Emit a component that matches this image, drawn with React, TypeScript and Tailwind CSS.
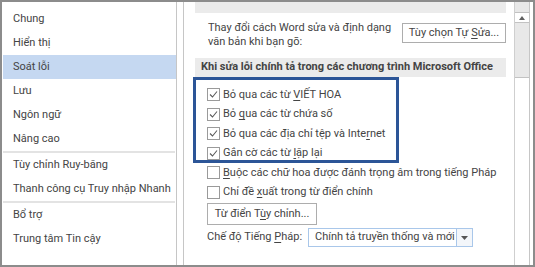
import type { ReactNode } from "react";

const font = { fontFamily: 'Roboto, "Noto Sans", sans-serif' };

function U({ children }: { children: ReactNode }) {
  return <span className="underline underline-offset-2 decoration-[1px]">{children}</span>;
}

type NavItem = { label: string; active?: boolean } | "sep";

const nav: NavItem[] = [
  { label: "Chung" },
  { label: "Hiển thị" },
  { label: "Soát lỗi", active: true },
  { label: "Lưu" },
  { label: "Ngôn ngữ" },
  { label: "Nâng cao" },
  "sep",
  { label: "Tùy chỉnh Ruy-băng" },
  { label: "Thanh công cụ Truy nhập Nhanh" },
  "sep",
  { label: "Bổ trợ" },
  { label: "Trung tâm Tin cậy" },
];

const options: { checked: boolean; label: ReactNode }[] = [
  { checked: true, label: <>Bỏ qua các từ <U>V</U>IẾT HOA</> },
  { checked: true, label: <>Bỏ <U>q</U>ua các từ chứa số</> },
  { checked: true, label: <>Bỏ qua các địa chỉ tệp và Inte<U>r</U>net</> },
  { checked: true, label: <>Gắn cờ các từ <U>l</U>ặp lại</> },
  { checked: false, label: <><U>B</U>uộc các chữ hoa được đánh trọng âm trong tiếng Pháp</> },
  { checked: false, label: <>Chỉ đề <U>x</U>uất trong từ điển chính</> },
];

function Checkbox({ checked }: { checked: boolean }) {
  return (
    <span className="flex h-[13px] w-[13px] shrink-0 items-center justify-center border border-[#9a9a9a] bg-white">
      {checked && (
        <svg width="11" height="11" viewBox="0 0 11 11">
          <path d="M2 5.5 L4.5 8 L9 2.5" fill="none" stroke="#5a5a5a" strokeWidth="1.1" />
        </svg>
      )}
    </span>
  );
}

export default function App() {
  return (
    <div
      className="flex h-[267px] w-[535px] overflow-hidden whitespace-nowrap border-2 border-[#8c8c8c] bg-white text-[11px] text-[#444]"
      style={font}
    >
      {/* category list */}
      <div className="flex w-[175px] shrink-0 flex-col border-r border-[#c6c6c6] pt-[5px] pl-px">
        {nav.map((item, i) =>
          item === "sep" ? (
            <div key={i} className="mr-px h-[2px] bg-[#e3e3e3]" />
          ) : (
            <div
              key={i}
              className={`flex h-6 items-center pl-[10px] ${item.active ? "bg-[#c5d8f1]" : ""}`}
            >
              {item.label}
            </div>
          )
        )}
      </div>

      {/* options pane */}
      <div className="ml-[6px] flex w-[347px] shrink-0 border-x border-[#c6c6c6]">
        <div className="relative flex-1 pl-[11px] pr-[8px]">
          <div className="h-[11px] bg-[#ebebeb]" />

          <div className="mt-[8px] flex items-start">
            <p className="pl-[13px] leading-[14px]">
              Thay đổi cách Word sửa và định dạng
              <br />
              văn bản khi bạn gõ:
            </p>
            <button className="ml-auto mt-[2px] h-[20px] w-[104px] border border-[#adadad] bg-white text-[11px] text-[#444]">
              Tùy chọn Tự <U>S</U>ửa...
            </button>
          </div>

          <div className="mt-[9px] flex h-[19px] items-center bg-[#ebebeb] pl-[6px] font-bold">
            Khi sửa lỗi chính tả trong các chương trình Microsoft Office
          </div>

          <div className="mt-[8px] flex flex-col pl-[12px]">
            {options.map((o, i) => (
              <div key={i} className="flex h-[19.5px] items-center gap-[3px]">
                <Checkbox checked={o.checked} />
                <span>{o.label}</span>
              </div>
            ))}
          </div>

          <button className="ml-[12px] mt-px h-[22px] w-[110px] border border-[#adadad] bg-white text-[11px] text-[#444]">
            Từ điển T<U>ù</U>y chỉnh...
          </button>

          <div className="mt-[3px] flex items-center pl-[12px]">
            <span className="w-[101px]">
              Chế độ Tiếng <U>P</U>háp:
            </span>
            <div className="flex h-[19px] w-[165px] items-center border border-[#a9c7ea] bg-white">
              <span className="flex-1 pl-[6px]">Chính tả truyền thống và mới</span>
              <span className="flex h-full w-[16px] items-center justify-center border-l border-[#a9c7ea] bg-[#f3f6fa]">
                <svg width="7" height="4" viewBox="0 0 7 4">
                  <path d="M0 0 H7 L3.5 4 Z" fill="#555" />
                </svg>
              </span>
            </div>
          </div>

          {/* highlight frame */}
          <div className="pointer-events-none absolute left-[9px] top-[75px] h-[86px] w-[206px] border-[3px] border-[#2c5597]" />
        </div>

        {/* scrollbar */}
        <div className="flex w-[15px] shrink-0 flex-col border-l border-[#cfcfcf] bg-[#e8e8e8]">
          <div className="mt-[10px] flex h-[11px] items-center justify-center border-y border-[#c2c2c2] bg-white">
            <svg width="6" height="4" viewBox="0 0 6 4">
              <path d="M0 4 H6 L3 0 Z" fill="#606060" />
            </svg>
          </div>
          <div className="mt-[54px] flex-1 border-t border-[#c2c2c2] bg-white" />
        </div>
      </div>
    </div>
  );
}
